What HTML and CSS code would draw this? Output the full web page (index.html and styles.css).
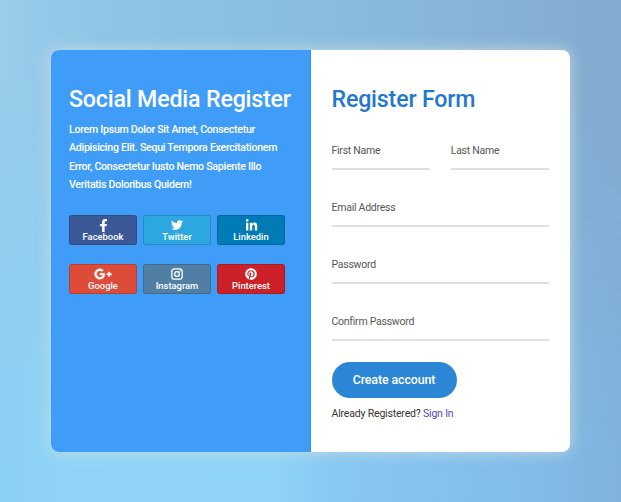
FILE: index.html
```html
<!DOCTYPE html>
<html lang="en">
<head>
<meta charset="utf-8">
<title>Register</title>
<link rel="stylesheet" href="styles.css">
</head>
<body>
<main class="card">
  <section class="social">
    <h1 class="title">Social Media Register</h1>
    <p class="intro">Lorem Ipsum Dolor Sit Amet, Consectetur<br>Adipisicing Elit. Sequi Tempora Exercitationem<br>Error, Consectetur Iusto Nemo Sapiente Illo<br>Veritatis Doloribus Quidem!</p>
    <div class="buttons">
      <a class="btn facebook"><svg class="icon" viewBox="0 0 320 512"><path d="M279.14 288l14.22-92.66h-88.91v-60.13c0-25.35 12.42-50.06 52.24-50.06h40.42V6.26S260.43 0 225.36 0c-73.22 0-121.08 44.38-121.08 124.72v70.62H22.89V288h81.39v224h100.17V288z"/></svg><span>Facebook</span></a>
      <a class="btn twitter"><svg class="icon" viewBox="0 0 512 512"><path d="M459.37 151.716c.325 4.548.325 9.097.325 13.645 0 138.72-105.583 298.558-298.558 298.558-59.452 0-114.68-17.219-161.137-47.106 8.447.974 16.568 1.299 25.34 1.299 49.055 0 94.213-16.568 130.274-44.832-46.132-.975-84.792-31.188-98.112-72.772 6.498.974 12.995 1.624 19.818 1.624 9.421 0 18.843-1.3 27.614-3.573-48.081-9.747-84.143-51.98-84.143-102.985v-1.299c13.969 7.797 30.214 12.67 47.431 13.319-28.264-18.843-46.781-51.005-46.781-87.391 0-19.492 5.197-37.36 14.294-52.954 51.655 63.675 129.3 105.258 216.365 109.807-1.624-7.797-2.599-15.918-2.599-24.04 0-57.828 46.782-104.934 104.934-104.934 30.213 0 57.502 12.67 76.67 33.137 23.715-4.548 46.456-13.32 66.599-25.34-7.798 24.366-24.366 44.833-46.132 57.827 21.117-2.273 41.584-8.122 60.426-16.243-14.292 20.791-32.161 39.308-52.628 54.253z"/></svg><span>Twitter</span></a>
      <a class="btn linkedin"><svg class="icon" viewBox="0 0 448 512"><path d="M100.28 448H7.4V148.9h92.88zM53.79 108.1C24.09 108.1 0 83.5 0 53.8a53.79 53.79 0 0 1 107.58 0c0 29.7-24.1 54.3-53.79 54.3zM447.9 448h-92.68V302.4c0-34.7-.7-79.2-48.29-79.2-48.29 0-55.69 37.7-55.69 76.7V448h-92.78V148.9h89.08v40.8h1.3c12.4-23.5 42.69-48.3 87.88-48.3 94 0 111.28 61.9 111.28 142.3V448z"/></svg><span>Linkedin</span></a>
      <a class="btn google"><svg class="icon wide" viewBox="0 0 640 512"><path d="M386.061 228.496c1.834 9.692 3.143 19.384 3.143 31.956C389.204 370.205 315.599 448 204.8 448c-106.084 0-192-85.915-192-192s85.916-192 192-192c51.864 0 95.083 18.859 128.611 50.292l-52.126 50.03c-14.145-13.621-39.028-29.599-76.485-29.599-65.484 0-118.92 54.221-118.92 121.277 0 67.056 53.436 121.277 118.92 121.277 75.961 0 104.513-54.745 108.965-82.773H204.8v-66.009h181.261zm185.406 6.437V179.2h-56.001v55.733h-55.733v56.001h55.733v55.733h56.001v-55.733H627.2v-56.001h-55.733z"/></svg><span>Google</span></a>
      <a class="btn instagram"><svg class="icon" viewBox="0 0 24 24"><rect class="line" x="1.6" y="1.6" width="20.8" height="20.8" rx="5.6"/><circle class="line" cx="12" cy="12" r="4.8"/><circle cx="18" cy="6" r="1.4"/></svg><span>Instagram</span></a>
      <a class="btn pinterest"><svg class="icon" viewBox="0 0 496 512"><path d="M496 256c0 137-111 248-248 248-25.6 0-50.2-3.9-73.4-11.1 10.1-16.5 25.2-43.5 30.8-65 3-11.6 15.4-59 15.4-59 8.1 15.4 31.7 28.5 56.8 28.5 74.8 0 128.7-68.8 128.7-154.3 0-81.9-66.9-143.2-152.9-143.2-107 0-163.9 71.8-163.9 150.1 0 36.4 19.4 81.7 50.3 96.1 4.7 2.2 7.2 1.2 8.3-3.3.8-3.4 5-20.3 6.9-28.1.6-2.5.3-4.7-1.7-7.1-10.1-12.5-18.3-35.3-18.3-56.6 0-54.7 41.4-107.6 112-107.6 60.9 0 103.6 41.5 103.6 100.9 0 67.1-33.9 113.6-78 113.6-24.3 0-42.6-20.1-36.7-44.8 7-29.5 20.5-61.3 20.5-82.6 0-19-10.2-34.9-31.4-34.9-24.9 0-44.9 25.7-44.9 60.2 0 22 7.4 36.8 7.4 36.8s-24.5 103.8-29 123.2c-5 21.4-3 51.6-.9 71.2C65.4 450.9 0 361.1 0 256 0 119 111 8 248 8s248 111 248 248z"/></svg><span>Pinterest</span></a>
    </div>
  </section>
  <form class="form">
    <h2 class="title form-title">Register Form</h2>
    <div class="row">
      <label class="field">First Name</label>
      <label class="field">Last Name</label>
    </div>
    <label class="field">Email Address</label>
    <label class="field">Password</label>
    <label class="field">Confirm Password</label>
    <button class="submit" type="button">Create account</button>
    <p class="signin">Already Registered? <a class="link">Sign In</a></p>
  </form>
</main>
</body>
</html>
```
FILE: styles.css
```css
* { box-sizing: border-box; }

body {
  margin: 0;
  width: 621px;
  height: 502px;
  padding: 50px 51px;
  overflow: hidden;
  font-family: Roboto, "Liberation Sans", sans-serif;
  background: linear-gradient(90deg, #9bcdec 0%, #8fc5e6 16%, #8abee1 45%, #88b8dc 65%, #83abd0 97%);
}

body::before {
  content: "";
  position: absolute;
  inset: 0;
  z-index: -1;
  background: linear-gradient(90deg, #8ad0f4 0%, #90d5f8 12%, #90d4f7 44%, #87c8f2 54%, #83bce9 85%, #80b2dc 100%);
  -webkit-mask-image: linear-gradient(180deg, transparent 15%, #000 92%);
  mask-image: linear-gradient(180deg, transparent 15%, #000 92%);
}

.card {
  display: flex;
  width: 519px;
  height: 401.5px;
  border-radius: 8px;
  background: #fff;
  box-shadow: 0 0 15px rgba(208, 222, 224, 0.85);
  overflow: hidden;
}

.social {
  width: 259.5px;
  padding: 35px 0 0 18px;
  background: #409df7;
  border-right: 1px solid #2c91fb;
  color: #fff;
}

.title {
  margin: 0;
  font-size: 23.2px;
  font-weight: 500;
  line-height: 29px;
  letter-spacing: -0.18px;
  white-space: nowrap;
}

.intro {
  margin: 6.5px 0 0;
  font-size: 10.6px;
  font-weight: 500;
  letter-spacing: -0.27px;
  line-height: 18.6px;
  white-space: nowrap;
}

.buttons {
  display: grid;
  grid-template-columns: repeat(3, 68px);
  grid-auto-rows: 30px;
  gap: 19px 6px;
  margin-top: 20.1px;
}

.btn {
  display: flex;
  flex-direction: column;
  align-items: center;
  padding-top: 3px;
  border: 1px solid rgba(0, 0, 0, 0.16);
  border-radius: 3px;
  font-size: 9.4px;
  font-weight: 500;
  line-height: 12px;
}

.facebook { background: #3b5998; }
.twitter { background: #2ca7e0; }
.linkedin { background: #007bb6; }
.google { background: #dd4b39; }
.instagram { background: #517fa4; }
.pinterest { background: #cb2027; }

.icon {
  flex: none;
  height: 12px;
  width: 12px;
  fill: #fff;
}

.facebook .icon, .linkedin .icon { height: 13px; width: 13px; margin-bottom: -1px; }

.wide { width: 18px; height: 14px; margin: -1px 0; stroke: #fff; stroke-width: 14; }

.line { fill: none; stroke: #fff; stroke-width: 2.5; }

.form {
  flex: 1;
  padding: 35px 21px 0 21px;
}

.form-title { color: #2277cf; margin-bottom: 15px; }

.row {
  display: grid;
  grid-template-columns: 1fr 1fr;
  gap: 21px;
}

.field {
  display: block;
  height: 57px;
  padding-top: 31px;
  border-bottom: 2px solid #e0e0e0;
  color: #565656;
  font-size: 10.5px;
  letter-spacing: -0.25px;
  line-height: 14px;
}

.row .field { height: 41px; padding-top: 15px; }

.submit {
  display: block;
  width: 125px;
  height: 36px;
  margin-top: 21px;
  padding: 0;
  border: 0;
  border-radius: 18px;
  background: #2b86d6;
  color: #fff;
  font: 500 12.4px/36px Roboto, sans-serif;
  letter-spacing: -0.1px;
}

.signin {
  margin: 9px 0 0;
  color: #333;
  font-size: 10.5px;
  letter-spacing: -0.18px;
  line-height: 14px;
}

.link { color: #5146b5; }
```
